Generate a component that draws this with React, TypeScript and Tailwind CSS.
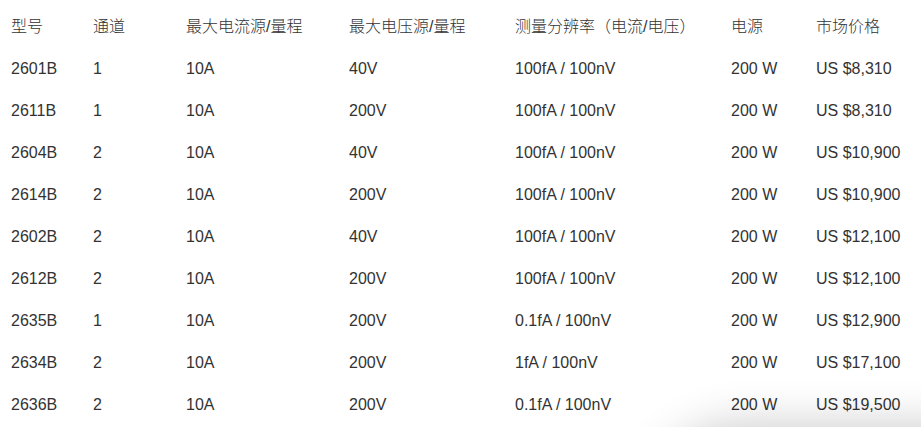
const headers = ["型号", "通道", "最大电流源/量程", "最大电压源/量程", "测量分辨率（电流/电压）", "电源", "市场价格"]

const rows = [
  ["2601B", "1", "10A", "40V", "100fA / 100nV", "200 W", "US $8,310"],
  ["2611B", "1", "10A", "200V", "100fA / 100nV", "200 W", "US $8,310"],
  ["2604B", "2", "10A", "40V", "100fA / 100nV", "200 W", "US $10,900"],
  ["2614B", "2", "10A", "200V", "100fA / 100nV", "200 W", "US $10,900"],
  ["2602B", "2", "10A", "40V", "100fA / 100nV", "200 W", "US $12,100"],
  ["2612B", "2", "10A", "200V", "100fA / 100nV", "200 W", "US $12,100"],
  ["2635B", "1", "10A", "200V", "0.1fA / 100nV", "200 W", "US $12,900"],
  ["2634B", "2", "10A", "200V", "1fA / 100nV", "200 W", "US $17,100"],
  ["2636B", "2", "10A", "200V", "0.1fA / 100nV", "200 W", "US $19,500"],
]

const gridCols = "grid grid-cols-[82px_93px_163px_166px_216px_85px_1fr] h-[42px] items-center"

export default function App() {
  return (
    <div
      className="relative h-[427px] w-full overflow-hidden bg-white text-[16px] text-[#333333]"
      style={{ fontFamily: '"Liberation Sans", Arial, "Noto Sans CJK SC", sans-serif' }}
    >
      <div className="pt-[6px] pl-[11px]">
        {/* 表头 */}
        <div className={gridCols + " font-light"}>
          {headers.map((h) => (
            <div key={h} className="whitespace-nowrap">
              {h}
            </div>
          ))}
        </div>

        {/* 型号列表 */}
        {rows.map((row) => (
          <div key={row[0]} className={gridCols}>
            {row.map((cell, i) => (
              <div key={i} className="whitespace-nowrap">
                {cell}
              </div>
            ))}
          </div>
        ))}
      </div>

      {/* 底部浮层阴影 */}
      <div className="absolute left-[660px] right-[-60px] top-[438px] h-[80px] rounded-tl-[80px] bg-white shadow-[0_0_45px_14px_rgba(0,0,0,0.2)]" />
    </div>
  )
}
